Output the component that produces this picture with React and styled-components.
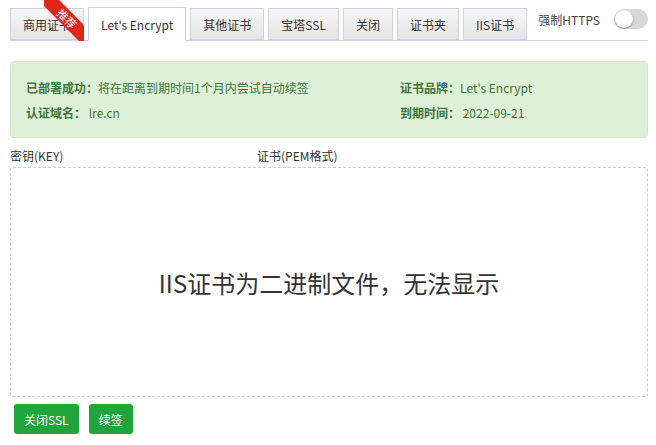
import React from 'react';
import styled, { createGlobalStyle } from 'styled-components';

const GREEN = '#20a53a';

const GlobalStyle = createGlobalStyle`
  body {
    margin: 0;
    background: #fff;
    font-family: "Microsoft YaHei", "Noto Sans CJK SC", "Liberation Sans", sans-serif;
    font-size: 12px;
    color: #333;
  }
`;

const PageStyled = styled.div`
  width: 638px;
  padding: 7px 0 0 10px;
`;

const TabBarStyled = styled.div`
  display: flex;
  align-items: flex-end;
  height: 33px;
  border-bottom: 1px solid #d2d2e0;
`;

const TabStyled = styled.div`
  position: relative;
  display: flex;
  align-items: center;
  height: ${({ active }) => (active ? '32px' : '30px')};
  padding: 0 12px;
  margin-right: 4px;
  margin-bottom: ${({ active }) => (active ? '-1px' : '0')};
  border: 1px solid #cfcfe0;
  border-bottom: ${({ active }) => (active ? '1px solid #fff' : '1px solid #cfcfe0')};
  background: ${({ active }) => (active ? '#fff' : 'linear-gradient(#f7f7f7, #e4e4e4)')};
  color: #333;
  white-space: nowrap;
`;

const RibbonClipStyled = styled.span`
  position: absolute;
  top: -9px;
  right: -1px;
  width: 40px;
  height: 41px;
  overflow: hidden;
  pointer-events: none;
`;

const RibbonStyled = styled.span`
  position: absolute;
  top: 11px;
  left: -7px;
  width: 60px;
  height: 15px;
  line-height: 15px;
  background: #e1271c;
  color: #fff;
  font-size: 11px;
  text-align: center;
  transform: rotate(45deg);
`;

const HttpsStyled = styled.div`
  display: flex;
  align-items: center;
  margin-left: auto;
  align-self: flex-start;
  margin-top: 2px;
  gap: 14px;
  color: #444;
`;

const SwitchStyled = styled.span`
  position: relative;
  width: 34px;
  height: 20px;
  border-radius: 10px;
  background: #d8d8d8;
  &::after {
    content: '';
    position: absolute;
    left: 1px;
    top: 1px;
    width: 18px;
    height: 18px;
    border-radius: 50%;
    background: #fff;
    box-shadow: 0 1px 2px rgba(0, 0, 0, 0.35);
  }
`;

const AlertStyled = styled.div`
  display: grid;
  grid-template-columns: 374px 1fr;
  margin-top: 20px;
  padding: 13px 15px 12px;
  background: #dff0d8;
  border: 1px solid #d6e9c6;
  border-radius: 4px;
  color: #3c763d;
  line-height: 25px;
`;

const AlertItemStyled = styled.div`
  white-space: nowrap;
  b {
    font-weight: bold;
  }
`;

const LabelsStyled = styled.div`
  display: grid;
  grid-template-columns: 247px 1fr;
  margin-top: 8px;
  line-height: 20px;
  color: #333;
`;

const CodeBoxStyled = styled.div`
  display: flex;
  align-items: center;
  justify-content: center;
  height: 228px;
  margin-top: 1px;
  border: 1px dashed #ccc;
  border-radius: 3px;
  font-size: 24px;
  color: #333;
`;

const ButtonRowStyled = styled.div`
  display: flex;
  gap: 10px;
  margin: 7px 0 0 4px;
`;

const ButtonStyled = styled.button`
  height: 30px;
  padding: 0 10px;
  border: none;
  border-radius: 3px;
  background: ${GREEN};
  color: #fff;
  font-family: inherit;
  font-size: 12px;
`;

const tabs = ['商用证书', "Let's Encrypt", '其他证书', '宝塔SSL', '关闭', '证书夹', 'IIS证书'];

const App = () => (
  <PageStyled>
    <GlobalStyle />
    <TabBarStyled>
      {tabs.map((tab, i) => (
        <TabStyled key={tab} active={i === 1}>
          {tab}
          {i === 0 && (
            <RibbonClipStyled>
              <RibbonStyled>{'推荐'}</RibbonStyled>
            </RibbonClipStyled>
          )}
        </TabStyled>
      ))}
      <HttpsStyled>
        {'强制HTTPS'}
        <SwitchStyled />
      </HttpsStyled>
    </TabBarStyled>
    <AlertStyled>
      <AlertItemStyled>
        <b>{'已部署成功：'}</b>
        {'将在距离到期时间1个月内尝试自动续签'}
      </AlertItemStyled>
      <AlertItemStyled>
        <b>{'证书品牌：'}</b>
        {"Let's Encrypt"}
      </AlertItemStyled>
      <AlertItemStyled>
        <b>{'认证域名：'}</b>
        {' lre.cn'}
      </AlertItemStyled>
      <AlertItemStyled>
        <b>{'到期时间：'}</b>
        {' 2022-09-21'}
      </AlertItemStyled>
    </AlertStyled>
    <LabelsStyled>
      <span>{'密钥(KEY)'}</span>
      <span>{'证书(PEM格式)'}</span>
    </LabelsStyled>
    <CodeBoxStyled>{'IIS证书为二进制文件，无法显示'}</CodeBoxStyled>
    <ButtonRowStyled>
      <ButtonStyled>{'关闭SSL'}</ButtonStyled>
      <ButtonStyled>{'续签'}</ButtonStyled>
    </ButtonRowStyled>
  </PageStyled>
);

export default App;
